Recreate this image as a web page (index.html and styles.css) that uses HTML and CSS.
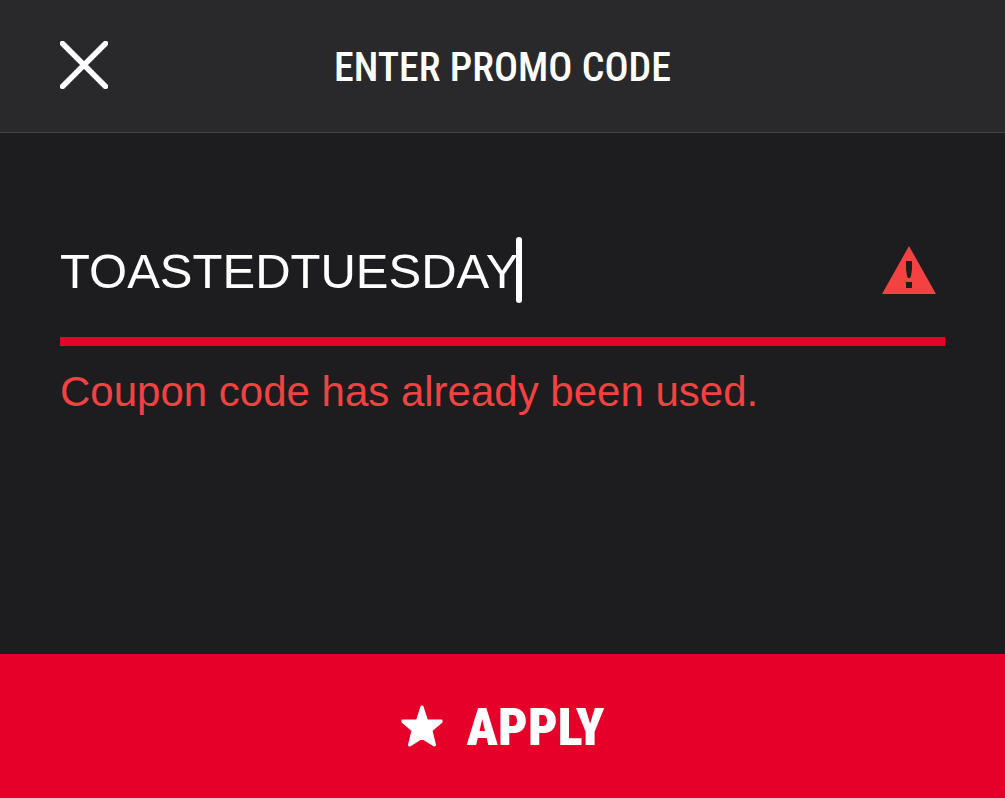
FILE: index.html
```html
<!DOCTYPE html>
<html lang="en">
<head>
    <meta charset="UTF-8">
    <meta name="viewport" content="width=device-width, initial-scale=1.0">
    <title>Enter Promo Code</title>
    <link rel="stylesheet" href="styles.css">
</head>
<body>
    <header class="header">
        <button class="close-btn" type="button" aria-label="Close">
            <svg viewBox="0 0 48 48" width="48" height="48">
                <path d="M2.5 2.5 45.5 45.5M45.5 2.5 2.5 45.5" stroke="#fff" stroke-width="5.5" stroke-linecap="round"/>
            </svg>
        </button>
        <h1 class="title">ENTER PROMO CODE</h1>
    </header>
    <form class="promo-form" id="promoForm">
        <div class="field">
            <input class="code-input" type="text" id="promoCode" value="TOASTEDTUESDAY" aria-label="Promo code" aria-invalid="true" aria-describedby="promoError" autocomplete="off" spellcheck="false">
            <span class="caret"></span>
            <svg class="warning-icon" viewBox="0 0 54 48" width="54" height="48" aria-hidden="true">
                <path d="M27 0 54 48H0Z" fill="#f44141"/>
                <path d="M24 15h6v8l-1 7-1 2h-2l-1-2-1-7zM24 36h6v6h-6z" fill="#1d1d1f"/>
            </svg>
        </div>
        <p class="error" id="promoError">Coupon code has already been used.</p>
    </form>
    <button class="apply-btn" type="submit" form="promoForm">
        <svg viewBox="0 0 42 42" width="42" height="42" aria-hidden="true">
            <path d="M20.5 1.5H21.5L26 15.5H40.5V17L30.5 25.5 34 40 33 40.5 21 33 9 40.5 8 40 11.5 25.5 1.5 17V15.5H16Z" fill="#fff" stroke="#fff" stroke-width="2" stroke-linejoin="round"/>
        </svg>
        <span>APPLY</span>
    </button>
</body>
</html>
```
FILE: styles.css
```css
* {
    margin: 0;
    padding: 0;
    box-sizing: border-box;
}
body {
    display: flex;
    flex-direction: column;
    min-height: 100vh;
    background: #1d1d1f;
    color: #fff;
    font-family: "Liberation Sans", Arial, sans-serif;
}
button {
    border: none;
    background: none;
    color: inherit;
    cursor: pointer;
}
svg {
    display: block;
    fill: none;
}
.header {
    display: grid;
    grid-template-columns: 48px 1fr 48px;
    align-items: center;
    padding: 35px 60px 37px;
    background: #29292b;
    border-bottom: 1px solid #434345;
}
.title {
    padding-top: 6px;
    font-family: "Roboto Condensed", Roboto, sans-serif;
    font-size: 40px;
    line-height: 54px;
    font-weight: 500;
    text-align: center;
    white-space: nowrap;
}
.promo-form {
    flex: 1;
    padding: 104px 60px 40px;
}
.field {
    display: flex;
    align-items: center;
    padding-bottom: 34px;
    border-bottom: 9px solid #e60029;
}
.code-input {
    field-sizing: content;
    min-width: 0;
    padding-top: 2px;
    border: none;
    outline: none;
    background: none;
    color: #fff;
    caret-color: transparent;
    font-family: inherit;
    font-size: 49px;
    line-height: 64px;
}
.caret {
    width: 6px;
    height: 66px;
    margin-left: -2px;
    border-radius: 3px;
    background: #fff;
}
.warning-icon {
    flex: none;
    margin-left: auto;
    margin-right: 9px;
}
.error {
    margin-top: 21px;
    color: #f44141;
    font-size: 42px;
    line-height: 50px;
}
.apply-btn {
    display: flex;
    align-items: center;
    justify-content: center;
    gap: 24px;
    min-height: 144px;
    background: #e60029;
    font-family: "Roboto Condensed", Roboto, sans-serif;
    font-size: 52px;
    font-weight: 900;
    line-height: 60px;
}
.apply-btn span {
    padding-top: 4px;
}
```
